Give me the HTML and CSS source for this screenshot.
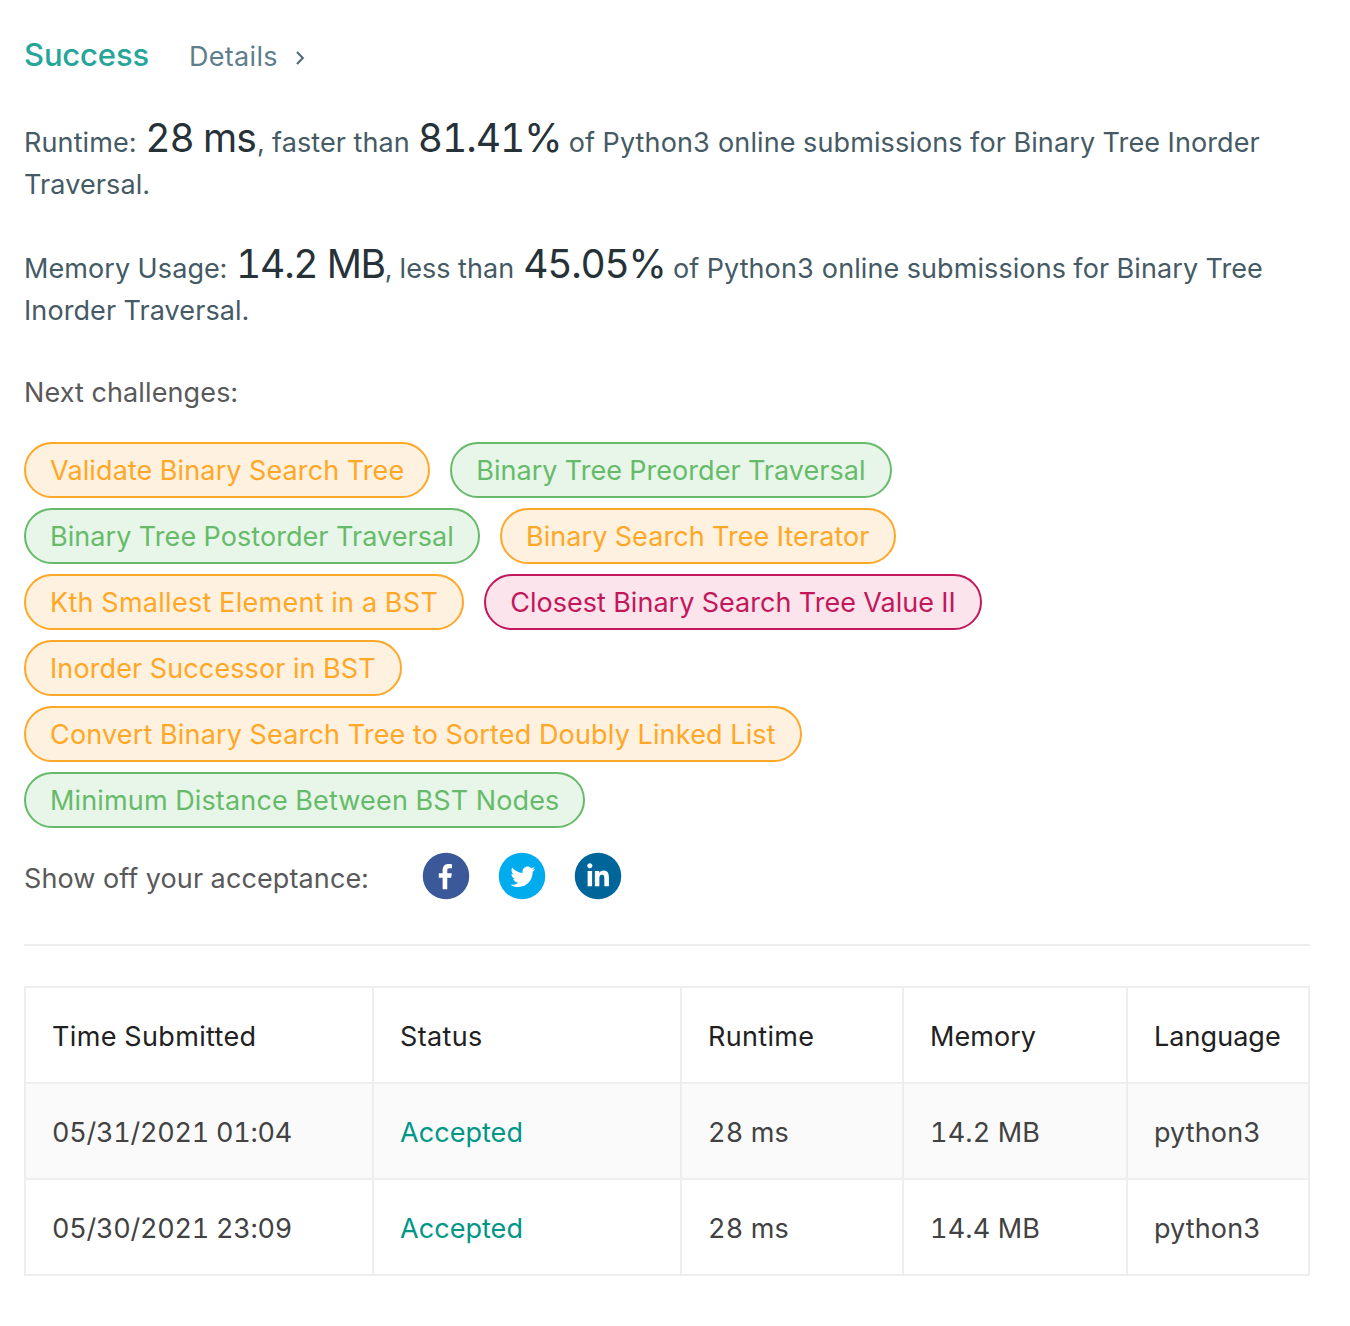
FILE: index.html
```html
<!DOCTYPE html>
<html lang="en">
<head>
<meta charset="utf-8">
<title>Submission result</title>
<link rel="stylesheet" href="styles.css">
</head>
<body>
<main class="page">
  <header class="result-head">
    <span class="status">Success</span>
    <a class="details">Details
      <svg class="chevron" viewBox="0 0 10 14" aria-hidden="true"><path d="M2 1 7.8 7 2 13"/></svg>
    </a>
  </header>
  <p class="summary runtime">Runtime: <span class="figure">28 ms</span>, faster than <span class="figure">81.41%</span> of Python3 online submissions for Binary Tree Inorder Traversal.</p>
  <p class="summary memory">Memory Usage: <span class="figure">14.2 MB</span>, less than <span class="figure">45.05%</span> of Python3 online submissions for Binary Tree Inorder Traversal.</p>
  <h2 class="next-title">Next challenges:</h2>
  <div class="challenges">
    <a class="pill medium">Validate Binary Search Tree</a>
    <a class="pill easy tight">Binary Tree Preorder Traversal</a>
    <a class="pill easy snug">Binary Tree Postorder Traversal</a>
    <a class="pill medium snug">Binary Search Tree Iterator</a>
    <a class="pill medium loose">Kth Smallest Element in a BST</a>
    <a class="pill hard tight">Closest Binary Search Tree Value II</a>
    <a class="pill medium">Inorder Successor in BST</a>
    <a class="pill medium wide">Convert Binary Search Tree to Sorted Doubly Linked List</a>
    <a class="pill easy roomy">Minimum Distance Between BST Nodes</a>
  </div>
  <div class="share">
    <span class="share-label">Show off your acceptance:</span>
    <svg class="social" viewBox="0 0 64 64" role="img" aria-label="Facebook"><circle cx="32" cy="32" r="31" fill="#3b5998"/><path fill="#fff" d="M33.7 49.5V34.4h5.2l.8-6h-6v-3.7c0-1.8.6-2.9 3-2.9H40v-5.4c-.6-.1-2.5-.3-4.7-.3-4.7 0-7.8 2.8-7.8 8v4.3h-5.1v6h5.1v15.1h6.2z"/></svg>
    <svg class="social" viewBox="0 0 64 64" role="img" aria-label="Twitter"><circle cx="32" cy="32" r="31" fill="#00aced"/><path fill="#fff" transform="translate(.2 -.5) scale(1.03 1.05)" d="M48 22.1c-1.2.5-2.4.9-3.8 1 1.4-.8 2.4-2.1 2.9-3.6-1.3.8-2.7 1.3-4.2 1.6-1.2-1.3-2.9-2.1-4.8-2.1-3.6 0-6.6 2.9-6.6 6.6 0 .5.1 1 .2 1.5-5.5-.3-10.3-2.9-13.5-6.9-.6 1-.9 2.1-.9 3.3 0 2.3 1.2 4.3 2.9 5.5-1.1 0-2.1-.3-3-.8v.1c0 3.2 2.3 5.8 5.3 6.4-.6.1-1.1.2-1.7.2-.4 0-.8 0-1.2-.1.8 2.6 3.3 4.5 6.1 4.6-2.2 1.8-5.1 2.8-8.2 2.8-.5 0-1.1 0-1.6-.1 2.9 1.9 6.4 2.9 10.1 2.9 12.1 0 18.7-10 18.7-18.7v-.8c1.3-1 2.4-2.1 3.3-3.4z"/></svg>
    <svg class="social" viewBox="0 0 64 64" role="img" aria-label="LinkedIn"><circle cx="32" cy="32" r="31" fill="#006699"/><path fill="#fff" transform="translate(-4.5 -6.2) scale(1.11 1.18)" d="M20.4 44h5.4V26.6h-5.4V44zm2.7-26c-1.7 0-3.1 1.3-3.1 2.9s1.4 2.9 3.1 2.9 3.1-1.3 3.1-2.9S24.8 18 23.1 18zm16.4 8.2c-2.6 0-4.4 1.4-5.1 2.8h-.1v-2.4h-5.2V44h5.4v-8.6c0-2.3.4-4.5 3.2-4.5s2.8 2.6 2.8 4.6V44H46v-9.5c0-4.7-1-8.3-6.5-8.3z"/></svg>
  </div>
  <hr class="rule">
  <table class="submissions">
    <colgroup><col class="c-time"><col class="c-status"><col class="c-runtime"><col class="c-memory"><col class="c-lang"></colgroup>
    <thead>
      <tr><th>Time Submitted</th><th>Status</th><th>Runtime</th><th class="even">Memory</th><th class="even">Language</th></tr>
    </thead>
    <tbody>
      <tr class="alt"><td class="time">05/31/2021 01:04</td><td class="accepted">Accepted</td><td>28 ms</td><td>14.2 MB</td><td>python3</td></tr>
      <tr><td class="time">05/30/2021 23:09</td><td class="accepted">Accepted</td><td>28 ms</td><td>14.4 MB</td><td>python3</td></tr>
    </tbody>
  </table>
</main>
</body>
</html>
```
FILE: styles.css
```css
* { box-sizing: border-box; }
body {
  margin: 0;
  background: #fff;
  color: #424242;
  font-family: Inter, "Liberation Sans", sans-serif;
  font-size: 27px;
  line-height: 42px;
  letter-spacing: .12px;
  font-variant-numeric: tabular-nums;
}
.page { width: 1310px; padding: 34px 0 0 24px; }
.result-head { display: flex; align-items: baseline; height: 42px; }
.status { color: #26a69a; font-size: 31px; font-weight: 500; letter-spacing: -.15px; width: 165px; }
.details { color: #607d8b; letter-spacing: .3px; }
.chevron { width: 10px; height: 14px; margin: 0 0 1px 10px; fill: none; stroke: #546e7a; stroke-width: 2.2; }
.summary { margin: 0; color: #455a64; height: 84px; }
.runtime { margin-top: 42px; }
.memory { margin-top: 42px; letter-spacing: .09px; }
.figure { margin-left: 1.5px; color: #263238; font-size: 39px; line-height: 1; letter-spacing: -1.05px; }
.runtime .figure:first-child { margin-right: 1.5px; }
.runtime .figure:last-child { margin-left: .5px; }
.memory .figure { letter-spacing: -1.25px; }
.next-title { margin: 44px 0 0; font-size: inherit; font-weight: 400; color: #595959; }
.challenges { display: flex; flex-wrap: wrap; gap: 10px 20px; width: 1100px; margin-top: 28px; }
.pill {
  height: 56px;
  padding: 1px 24px 0;
  border: 2px solid;
  border-radius: 28px;
  line-height: 52px;
  white-space: nowrap;
}
.tight { letter-spacing: .03px; }
.snug { letter-spacing: .07px; }
.roomy { letter-spacing: .15px; }
.wide { letter-spacing: .18px; }
.loose { letter-spacing: .28px; }
.medium { color: #ffa726; background: #fff1df; }
.easy { color: #66bb6a; background: #e8f5e9; }
.hard { color: #c2185b; background: #fbe4ec; }
.share { display: flex; align-items: center; height: 48px; margin-top: 24px; color: #595959; }
.share-label { width: 398px; padding-top: 5px; }
.social { width: 48px; height: 48px; margin-right: 28px; }
.rule { height: 2px; margin: 44px 0 40px; border: 0; background: #eee; }
.submissions { width: 1286px; border-collapse: collapse; table-layout: fixed; }
.submissions th, .submissions td {
  height: 96px;
  padding: 4px 0 0 26px;
  border: 2px solid #eee;
  text-align: left;
  font-weight: 400;
}
.submissions th { color: #212121; letter-spacing: .34px; }
.submissions .even { letter-spacing: .05px; }
.alt { background: #fafafa; }
.submissions .time { letter-spacing: -.25px; }
.submissions .accepted { color: #009688; letter-spacing: .05px; }
.c-time { width: 348px; }
.c-status { width: 308px; }
.c-runtime { width: 222px; }
.c-memory { width: 224px; }
.c-lang { width: 182px; }
```
